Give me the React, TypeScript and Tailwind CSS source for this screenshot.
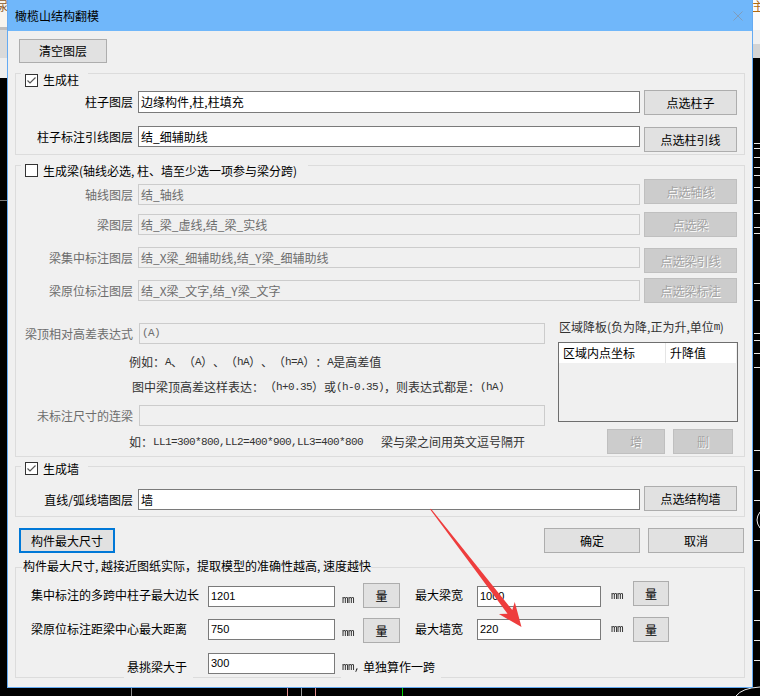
import React from "react";

type Kids = { children?: React.ReactNode; className?: string };

const M = ({ children, className = "" }: Kids) => (
  <span className={`font-['Liberation_Mono',monospace] text-[11px] tracking-[-0.6px] ${className}`}>{children}</span>
);

const MM = ({ children }: Kids) => (
  <span className="inline-block font-['Liberation_Mono',monospace] text-[11px] tracking-[-0.6px] text-[#222222] [will-change:transform]">
    {children}
  </span>
);

const N = ({ children }: Kids) => (
  <span className="font-['Liberation_Sans',Arial,sans-serif] text-[11px]">{children}</span>
);

function Check({ checked }: { checked: boolean }) {
  return (
    <span className="flex h-[13px] w-[13px] shrink-0 items-center justify-center border border-[#333333] bg-white">
      {checked && (
        <svg width="11" height="11" viewBox="0 0 11 11">
          <path d="M1.5 5.5 L4 8 L9.5 2.5" fill="none" stroke="#555555" strokeWidth="1.2" />
        </svg>
      )}
    </span>
  );
}

function Btn({
  className = "",
  children,
  disabled = false,
  focus = false,
}: Kids & { disabled?: boolean; focus?: boolean }) {
  const look = disabled
    ? "border border-[#bfbfbf] bg-[#cccccc] text-[#a3a3a3] [text-shadow:1px_1px_0_#ffffff]"
    : focus
    ? "border-2 border-[#0078d7] bg-[#e1e1e1] text-black"
    : "border border-[#adadad] bg-[#e1e1e1] text-black";
  return (
    <button
      type="button"
      className={`flex shrink-0 items-center justify-center leading-none ${look} ${className}`}
    >
      {children}
    </button>
  );
}

function Field({ className = "", children, disabled = false }: Kids & { disabled?: boolean }) {
  const look = disabled
    ? "border-[#cccccc] bg-[#f0f0f0] text-[#6d6d6d]"
    : "border-[#7a7a7a] bg-white text-black";
  return (
    <div
      className={`flex shrink-0 items-center overflow-hidden whitespace-nowrap border pl-[2px] leading-none ${look} ${className}`}
    >
      {children}
    </div>
  );
}

function LayerRow({
  label,
  value,
  btn,
  rowMt,
  inMt,
  inH,
  btnMt,
  disabled = false,
}: {
  label: string;
  value: React.ReactNode;
  btn: string;
  rowMt: string;
  inMt: string;
  inH: string;
  btnMt: string;
  disabled?: boolean;
}) {
  return (
    <div className={`flex items-start ${rowMt}`}>
      <div
        className={`flex w-[122px] shrink-0 items-center justify-end whitespace-nowrap pr-[5px] ${inMt} ${inH} ${
          disabled ? "text-[#6d6d6d]" : "text-black"
        }`}
      >
        {label}
      </div>
      <Field className={`w-[502px] ${inMt} ${inH}`} disabled={disabled}>
        {value}
      </Field>
      <Btn className={`ml-[4px] h-[25px] w-[93px] ${btnMt}`} disabled={disabled}>
        {btn}
      </Btn>
    </div>
  );
}

function Group({ className = "", legend, children }: Kids & { legend: React.ReactNode }) {
  return (
    <div className={`relative ml-[7px] w-[730px] shrink-0 border border-[#dcdcdc] ${className}`}>
      {legend}
      {children}
    </div>
  );
}

function Backdrop() {
  const dashes = [143, 148, 157, 167, 175, 187, 200, 213, 227, 233, 283, 300, 333, 340, 353, 367, 450, 470, 500, 540, 590, 620, 640, 660];
  return (
    <svg className="absolute left-0 top-0" width="760" height="696" viewBox="0 0 760 696">
      <rect x="0" y="0" width="7" height="27" fill="#f7f4ee" />
      <text x="-4" y="11" fontSize="12" fill="#8b5a2b" fontFamily="Noto Sans CJK SC">尿</text>
      <rect x="0" y="27" width="7" height="3" fill="#bdbdbd" />
      <rect x="0" y="30" width="7" height="28" fill="#dadada" />
      <rect x="0" y="58" width="7" height="20" fill="#eeeeee" />
      <rect x="0" y="200" width="7" height="1" fill="#7a7a7a" />
      <rect x="753" y="0" width="7" height="30" fill="#fbfbfb" />
      <text x="752" y="11" fontSize="12" fill="#b06a10" fontFamily="Noto Sans CJK SC">主</text>
      <rect x="753" y="30" width="7" height="14" fill="#f0f0f0" />
      <rect x="753" y="44" width="7" height="14" fill="#d4d4d4" />
      {dashes.map((y) => (
        <rect key={y} x="754" y={y} width="6" height="1" fill="#e8e8e8" />
      ))}
      <path d="M760 512 Q754 520 760 528" fill="none" stroke="#e8e8e8" strokeWidth="1" />
      <line x1="131.5" y1="688" x2="131.5" y2="696" stroke="#8a8a8a" />
      <line x1="287.5" y1="688" x2="287.5" y2="696" stroke="#e08a8a" />
      <line x1="301.5" y1="688" x2="301.5" y2="696" stroke="#9a9a9a" />
      <line x1="315.5" y1="688" x2="315.5" y2="696" stroke="#e08a8a" />
      <line x1="402.5" y1="688" x2="402.5" y2="696" stroke="#00d000" />
      <path d="M736 696 Q742 688 760 687" fill="none" stroke="#e8e8e8" strokeWidth="1" />
    </svg>
  );
}

function Arrow() {
  return (
    <svg className="pointer-events-none absolute left-0 top-0" width="760" height="696" viewBox="0 0 760 696">
      <polygon
        points="430.02,509.37 507.52,613.78 498.92,614.11 521.5,627 514.76,601.89 512.28,610.12 430.98,508.63"
        fill="#ee3d3d"
      />
    </svg>
  );
}

export default function App() {
  return (
    <div className="relative h-[696px] w-[760px] overflow-hidden bg-black font-['Noto_Sans_CJK_SC',sans-serif] text-[12px] text-black [text-spacing-trim:space-all]">
      <Backdrop />
      <div className="absolute left-[7px] top-0 flex h-[688px] w-[746px] flex-col border-x border-b border-[#64aaf2] bg-[#f0f0f0]">
        {/* title bar */}
        <div className="flex h-[31px] shrink-0 items-center bg-[#70b7fa] pl-[7px]">
          <span className="leading-none">橄榄山结构翻模</span>
          <svg className="ml-auto mr-[9px]" width="10" height="10" viewBox="0 0 10 10">
            <path d="M0.5 0.5 L9.5 9.5 M9.5 0.5 L0.5 9.5" stroke="#7f9dbd" strokeWidth="1" fill="none" />
          </svg>
        </div>

        {/* body */}
        <div className="flex flex-1 flex-col">
          <Btn className="ml-[11px] mt-[8px] h-[24px] w-[88px]">清空图层</Btn>

          <Group
            className="mt-[10px] h-[82px]"
            legend={
              <div className="absolute left-[5px] top-[-1px] flex h-[14px] items-center gap-[5px] bg-[#f0f0f0] pl-[4px] pr-[9px] leading-none">
                <Check checked />
                <span>生成柱</span>
              </div>
            }
          >
            <LayerRow rowMt="mt-[16px]" inMt="mt-[1px]" inH="h-[22px]" btnMt="mt-0" label="柱子图层" value="边缘构件,柱,柱填充" btn="点选柱子" />
            <LayerRow rowMt="mt-[11px]" inMt="mt-0" inH="h-[21px]" btnMt="mt-[1px]" label="柱子标注引线图层" value="结_细辅助线" btn="点选柱引线" />
          </Group>

          <Group
            className="mt-[10px] h-[292px]"
            legend={
              <div className="absolute left-[5px] top-[-2px] flex h-[13px] items-center gap-[5px] bg-[#f0f0f0] pl-[4px] pr-[11px] leading-none">
                <Check checked={false} />
                <span>生成梁(轴线必选, 柱、墙至少选一项参与梁分跨)</span>
              </div>
            }
          >
            <LayerRow disabled rowMt="mt-[13px]" inMt="mt-[5px]" inH="h-[21px]" btnMt="mt-0" label="轴线图层" value="结_轴线" btn="点选轴线" />
            <LayerRow disabled rowMt="mt-[7px]" inMt="mt-[2px]" inH="h-[21px]" btnMt="mt-0" label="梁图层" value="结_梁_虚线,结_梁_实线" btn="点选梁" />
            <LayerRow disabled rowMt="mt-[10px]" inMt="mt-0" inH="h-[21px]" btnMt="mt-[1px]" label="梁集中标注图层" value="结_X梁_细辅助线,结_Y梁_细辅助线" btn="点选梁引线" />
            <LayerRow disabled rowMt="mt-[5px]" inMt="mt-[2px]" inH="h-[21px]" btnMt="mt-0" label="梁原位标注图层" value="结_X梁_文字,结_Y梁_文字" btn="点选梁标注" />

            <div className="flex">
              <div className="flex w-[542px] shrink-0 flex-col">
                <div className="mt-[20px] flex">
                  <div className="flex h-[21px] w-[123px] shrink-0 items-center justify-end whitespace-nowrap pr-[6px] leading-none text-[#6d6d6d]">
                    梁顶相对高差表达式
                  </div>
                  <Field disabled className="h-[21px] w-[406px]">
                    <M>(A)</M>
                  </Field>
                </div>
                <div className="mt-[10px] flex h-[16px] items-center whitespace-nowrap pl-[113px] leading-none text-[#333333]">
                  例如：<M>A</M>、（<M>A</M>）、（<M>hA</M>）、（<M>h=A</M>）：<M>A</M>是高差值
                </div>
                <div className="mt-[9px] flex h-[16px] items-center whitespace-nowrap pl-[116px] leading-none text-[#333333]">
                  图中梁顶高差这样表达：（<M>h+0.35</M>）或<M>(h-0.35)</M>，则表达式都是：<M>(hA)</M>
                </div>
                <div className="mt-[10px] flex">
                  <div className="flex h-[21px] w-[123px] shrink-0 items-center justify-end whitespace-nowrap pr-[6px] leading-none text-[#6d6d6d]">
                    未标注尺寸的连梁
                  </div>
                  <Field disabled className="h-[21px] w-[406px]" />
                </div>
                <div className="mt-[8px] flex h-[16px] items-center whitespace-nowrap pl-[113px] leading-none text-[#333333]">
                  <span className="flex w-[252px] shrink-0 items-center">
                    如：<M>LL1=300*800,LL2=400*900,LL3=400*800</M>
                  </span>
                  <span>梁与梁之间用英文逗号隔开</span>
                </div>
              </div>

              <div className="flex flex-col">
                <div className="ml-[1px] mt-[16px] flex h-[16px] items-center whitespace-nowrap leading-none text-[#333333]">
                  区域降板(负为降,正为升,单位<M>m</M>)
                </div>
                <div className="mt-[7px] h-[80px] w-[180px] border border-[#6e6e6e] bg-[#f0f0f0]">
                  <div className="flex h-[20px] w-[177px] bg-white leading-none">
                    <div className="flex w-[106px] items-center pl-[4px]">区域内点坐标</div>
                    <div className="w-px bg-[#e5e5e5]" />
                    <div className="flex flex-1 items-center pl-[4px]">升降值</div>
                  </div>
                </div>
                <div className="mt-[7px] flex">
                  <Btn disabled className="ml-[49px] h-[25px] w-[58px]">增</Btn>
                  <Btn disabled className="ml-[8px] h-[25px] w-[60px]">删</Btn>
                </div>
              </div>
            </div>
          </Group>

          <Group
            className="mt-[9px] h-[51px]"
            legend={
              <div className="absolute left-[5px] top-[-5px] flex h-[13px] items-center gap-[5px] bg-[#f0f0f0] pl-[4px] pr-[9px] leading-none">
                <Check checked />
                <span>生成墙</span>
              </div>
            }
          >
            <LayerRow rowMt="mt-[19px]" inMt="mt-[3px]" inH="h-[21px]" btnMt="mt-0" label="直线/弧线墙图层" value="墙" btn="点选结构墙" />
          </Group>

          <div className="mt-[11px] flex">
            <Btn focus className="ml-[11px] h-[25px] w-[96px]">构件最大尺寸</Btn>
            <Btn className="ml-[429px] h-[25px] w-[96px]">确定</Btn>
            <Btn className="ml-[8px] h-[25px] w-[96px]">取消</Btn>
          </div>

          <Group
            className="mt-[14px] h-[111px]"
            legend={
              <div className="absolute left-[6px] top-[-10px] flex h-[16px] items-center whitespace-nowrap bg-[#f0f0f0] pl-[1px] leading-none">
                构件最大尺寸, 越接近图纸实际，提取模型的准确性越高, 速度越快
              </div>
            }
          >
            <div className="mt-[13px] flex items-start pl-[15px] leading-none">
              <div className="mt-[6px] flex h-[16px] w-[177px] shrink-0 items-center whitespace-nowrap">集中标注的多跨中柱子最大边长</div>
              <Field className="mt-[5px] h-[21px] w-[127px]"><N>1201</N></Field>
              <div className="mt-[13px] flex h-[12px] w-[28px] shrink-0 items-center pl-[7px]"><MM>mm</MM></div>
              <Btn className="mt-[2px] h-[25px] w-[37px]">量</Btn>
              <div className="mt-[6px] flex h-[16px] w-[77px] shrink-0 items-center whitespace-nowrap pl-[15px]">最大梁宽</div>
              <Field className="mt-[5px] h-[21px] w-[124px]"><N>1000</N></Field>
              <div className="mt-[9px] flex h-[12px] w-[32px] shrink-0 items-center pl-[10px]"><MM>mm</MM></div>
              <Btn className="mt-0 h-[25px] w-[36px]">量</Btn>
            </div>
            <div className="mt-[9px] flex items-start pl-[15px] leading-none">
              <div className="mt-[4px] flex h-[16px] w-[177px] shrink-0 items-center whitespace-nowrap">梁原位标注距梁中心最大距离</div>
              <Field className="mt-[2px] h-[21px] w-[127px]"><N>750</N></Field>
              <div className="mt-[10px] flex h-[12px] w-[28px] shrink-0 items-center pl-[7px]"><MM>mm</MM></div>
              <Btn className="mt-[1px] h-[25px] w-[37px]">量</Btn>
              <div className="mt-[4px] flex h-[16px] w-[77px] shrink-0 items-center whitespace-nowrap pl-[15px]">最大墙宽</div>
              <Field className="mt-[2px] h-[21px] w-[124px]"><N>220</N></Field>
              <div className="mt-[6px] flex h-[12px] w-[32px] shrink-0 items-center pl-[10px]"><MM>mm</MM></div>
              <Btn className="mt-0 h-[25px] w-[36px]">量</Btn>
            </div>
            <div className="mt-[10px] flex items-start pl-[108px] leading-none">
              <div className="mt-[6px] h-[20px] w-[69px] shrink-0 bg-[#f0f0f0] pl-[3px]">
                <div className="flex h-[16px] items-center whitespace-nowrap">悬挑梁大于</div>
              </div>
              <div className="w-[15px] shrink-0" />
              <Field className="h-[21px] w-[127px]"><N>300</N></Field>
              <div className="ml-[6px] mt-[6px] h-[20px] w-[100px] shrink-0 bg-[#f0f0f0] pl-px">
                <div className="flex h-[16px] items-center whitespace-nowrap">
                  <MM>mm,</MM>
                  <span className="ml-[3px]">单独算作一跨</span>
                </div>
              </div>
            </div>
          </Group>
        </div>
      </div>
      <Arrow />
    </div>
  );
}
